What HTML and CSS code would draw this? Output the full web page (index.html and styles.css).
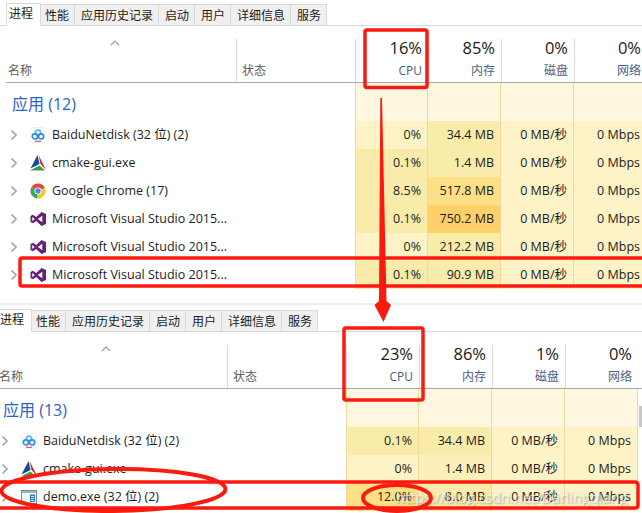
FILE: index.html
```html
<!DOCTYPE html>
<html lang="zh">
<head>
<meta charset="utf-8">
<title>任务管理器</title>
<link rel="stylesheet" href="styles.css">
</head>
<body>
<svg class="defs" width="0" height="0" aria-hidden="true">
  <symbol id="i-baidu" viewBox="0 0 16 16">
    <rect x="0.500" y="0.500" width="15" height="15" rx="2" fill="#fff" stroke="#f1f1f1"/>
    <circle cx="8" cy="5.600" r="2.600" fill="none" stroke="#55b4ee" stroke-width="1.700"/>
    <circle cx="4.900" cy="9.400" r="2.600" fill="none" stroke="#2f8fe6" stroke-width="1.700"/>
    <circle cx="11.100" cy="9.400" r="2.600" fill="none" stroke="#2f8fe6" stroke-width="1.700"/>
    <path d="M5 14.300h6" stroke="#ee5a64" stroke-width="1.300"/>
  </symbol>
  <symbol id="i-cmake" viewBox="0 0 16 16">
    <path d="M7.500 0 L0.500 13.500 L9.500 9Z" fill="#174a96"/>
    <path d="M8.500 0 L16 15 L10.500 9Z" fill="#c8252c"/>
    <path d="M0 15.500 L9.500 10.500 L15 15.500Z" fill="#3a9c48"/>
  </symbol>
  <symbol id="i-chrome" viewBox="0 0 16 16">
    <path d="M8 8 L1.500 4.200 A7.500 7.500 0 0 1 14.900 5Z" fill="#e0483e"/>
    <path d="M8 8 L14.900 5 A7.500 7.500 0 0 1 7 15.400Z" fill="#f6c42e"/>
    <path d="M8 8 L7 15.400 A7.500 7.500 0 0 1 1.500 4.200Z" fill="#3aa757"/>
    <circle cx="8" cy="8" r="3.600" fill="#fff"/>
    <circle cx="8" cy="8" r="2.700" fill="#4a8af4"/>
  </symbol>
  <symbol id="i-vs" viewBox="0 0 16 16">
    <path d="M11.500 1 L16 3 V13 L11.500 15 L6.200 10 L3 12.300 L0.500 11 V5 L3 3.700 L6.200 6 Z M2.200 6 V10 L4.800 8 Z M7.800 8 L12.300 11.300 V4.700 Z" fill="#68217a" fill-rule="evenodd"/>
  </symbol>
  <symbol id="i-app" viewBox="0 0 16 16">
    <rect x="0.500" y="1.500" width="15" height="13" fill="#f4f6f8" stroke="#7d8792"/>
    <rect x="1" y="2" width="14" height="2" fill="#9fb3c6"/>
    <rect x="9" y="5.500" width="5" height="7.500" fill="#2f7fd0"/>
    <path d="M10 7.500h3M10 9.500h3M10 11.500h3" stroke="#fff" stroke-width="0.800"/>
  </symbol>
  <symbol id="i-chev" viewBox="0 0 8 12">
    <path d="M1.500 1.500 L6 6 L1.500 10.500" fill="none" stroke="#a6a6a6" stroke-width="1.700"/>
  </symbol>
  <symbol id="i-sort" viewBox="0 0 10 6">
    <path d="M1 5 L5 1 L9 5" fill="none" stroke="#9a9a9a" stroke-width="1.200"/>
  </symbol>
</svg>

<main class="page">
  <section class="manager">
    <nav class="tabs">
      <span class="tab tab-on">进程</span><span class="tab">性能</span><span class="tab">应用历史记录</span><span class="tab">启动</span><span class="tab">用户</span><span class="tab">详细信息</span><span class="tab">服务</span>
    </nav>
    <div class="thead">
      <div class="th th-name"><svg class="sort"><use href="#i-sort"/></svg><span class="lab">名称</span></div>
      <div class="th th-status"><span class="lab">状态</span></div>
      <div class="th th-num"><span class="pct">16%</span><span class="lab">CPU</span></div>
      <div class="th th-num"><span class="pct">85%</span><span class="lab">内存</span></div>
      <div class="th th-num"><span class="pct">0%</span><span class="lab">磁盘</span></div>
      <div class="th th-num"><span class="pct">0%</span><span class="lab">网络</span></div>
    </div>
    <div class="row row-group">
      <div class="group">应用 (12)</div><div></div>
      <div class="c h0"></div><div class="c h0"></div><div class="c h0"></div><div class="c h0"></div>
    </div>
    <div class="row">
      <div class="proc"><svg class="chev"><use href="#i-chev"/></svg><svg class="ico"><use href="#i-baidu"/></svg><span class="pname">BaiduNetdisk (32 位) (2)</span></div><div></div>
      <div class="c h1">0%</div><div class="c h2">34.4 MB</div><div class="c h1">0 MB/秒</div><div class="c h1">0 Mbps</div>
    </div>
    <div class="row">
      <div class="proc"><svg class="chev"><use href="#i-chev"/></svg><svg class="ico"><use href="#i-cmake"/></svg><span class="pname">cmake-gui.exe</span></div><div></div>
      <div class="c h2">0.1%</div><div class="c h2">1.4 MB</div><div class="c h1">0 MB/秒</div><div class="c h1">0 Mbps</div>
    </div>
    <div class="row">
      <div class="proc"><svg class="chev"><use href="#i-chev"/></svg><svg class="ico"><use href="#i-chrome"/></svg><span class="pname">Google Chrome (17)</span></div><div></div>
      <div class="c h2">8.5%</div><div class="c h3">517.8 MB</div><div class="c h1">0 MB/秒</div><div class="c h1">0 Mbps</div>
    </div>
    <div class="row">
      <div class="proc"><svg class="chev"><use href="#i-chev"/></svg><svg class="ico"><use href="#i-vs"/></svg><span class="pname">Microsoft Visual Studio 2015...</span></div><div></div>
      <div class="c h2">0.1%</div><div class="c h4">750.2 MB</div><div class="c h1">0 MB/秒</div><div class="c h1">0 Mbps</div>
    </div>
    <div class="row">
      <div class="proc"><svg class="chev"><use href="#i-chev"/></svg><svg class="ico"><use href="#i-vs"/></svg><span class="pname">Microsoft Visual Studio 2015...</span></div><div></div>
      <div class="c h1">0%</div><div class="c h2">212.2 MB</div><div class="c h1">0 MB/秒</div><div class="c h1">0 Mbps</div>
    </div>
    <div class="row">
      <div class="proc"><svg class="chev"><use href="#i-chev"/></svg><svg class="ico"><use href="#i-vs"/></svg><span class="pname">Microsoft Visual Studio 2015...</span></div><div></div>
      <div class="c h2">0.1%</div><div class="c h2">90.9 MB</div><div class="c h1">0 MB/秒</div><div class="c h1">0 Mbps</div>
    </div>
  </section>

  <hr class="divider">

  <section class="manager manager-b">
    <nav class="tabs">
      <span class="tab tab-on">进程</span><span class="tab">性能</span><span class="tab">应用历史记录</span><span class="tab">启动</span><span class="tab">用户</span><span class="tab">详细信息</span><span class="tab">服务</span>
    </nav>
    <div class="thead">
      <div class="th th-name"><svg class="sort"><use href="#i-sort"/></svg><span class="lab">名称</span></div>
      <div class="th th-status"><span class="lab">状态</span></div>
      <div class="th th-num"><span class="pct">23%</span><span class="lab">CPU</span></div>
      <div class="th th-num"><span class="pct">86%</span><span class="lab">内存</span></div>
      <div class="th th-num"><span class="pct">1%</span><span class="lab">磁盘</span></div>
      <div class="th th-num"><span class="pct">0%</span><span class="lab">网络</span></div>
    </div>
    <div class="row row-group">
      <div class="group">应用 (13)</div><div></div>
      <div class="c h0"></div><div class="c h0"></div><div class="c h0"></div><div class="c h0"></div>
    </div>
    <div class="row">
      <div class="proc"><svg class="chev"><use href="#i-chev"/></svg><svg class="ico"><use href="#i-baidu"/></svg><span class="pname">BaiduNetdisk (32 位) (2)</span></div><div></div>
      <div class="c h2">0.1%</div><div class="c h2">34.4 MB</div><div class="c h1">0 MB/秒</div><div class="c h1">0 Mbps</div>
    </div>
    <div class="row">
      <div class="proc"><svg class="chev"><use href="#i-chev"/></svg><svg class="ico"><use href="#i-cmake"/></svg><span class="pname">cmake-gui.exe</span></div><div></div>
      <div class="c h1">0%</div><div class="c h1b">1.4 MB</div><div class="c h1">0 MB/秒</div><div class="c h1">0 Mbps</div>
    </div>
    <div class="row">
      <div class="proc"><svg class="chev"><use href="#i-chev"/></svg><svg class="ico"><use href="#i-app"/></svg><span class="pname">demo.exe (32 位) (2)</span></div><div></div>
      <div class="c h3">12.0%</div><div class="c h2">8.0 MB</div><div class="c h1">0 MB/秒</div><div class="c h1">0 Mbps</div>
    </div>
  </section>

  <div class="scroll-thumb"></div>
  <div class="watermark">https://blog.csdn.net/Darlingqiang</div>

  <svg class="marks" viewBox="0 0 642 513" width="642" height="513" aria-hidden="true">
    <g fill="none" stroke="#fb1a10" stroke-width="3.500">
      <rect x="365" y="30" width="62" height="57.500" rx="2"/>
      <path d="M650 258 H22 Q20 258 20 260 V284 Q20 286 22 286 H650"/>
      <path d="M344 400 V330 Q344 328 346 328 H421 Q423 328 423 330 V398 Q423 400 421 400 H346 Q344 400 344 398"/>
      <path d="M0 482 H635 Q638 482 638 485 V505 Q638 508 635 508 H0"/>
      <ellipse cx="113.500" cy="490" rx="112" ry="21" transform="rotate(-0.500 113 490)" stroke-width="4"/>
      <ellipse cx="397" cy="498" rx="34" ry="13" stroke-width="4"/>
    </g>
    <path d="M380.300 98 H382 L386.500 301 L391 305 L383.500 322 L374.500 305 L379 301Z" fill="#fb1a10"/>
  </svg>
</main>
</body>
</html>
```

FILE: styles.css
```css
* { box-sizing: border-box; }
html, body { margin: 0; padding: 0; background: #fff; }
body { width: 642px; height: 513px; overflow: hidden; }
.defs { position: absolute; }
.page {
  position: relative;
  width: 642px;
  height: 513px;
  overflow: hidden;
  font-family: "Open Sans", "Noto Sans CJK SC", sans-serif;
  font-size: 12.500px;
  color: #1c1c1c;
}
.manager { width: 660px; }
.manager-b { margin-left: -9px; }

.tabs {
  display: flex;
  align-items: flex-end;
  height: 26px;
  padding-left: 6px;
  border-bottom: 1px solid #d9d9d9;
}
.tab {
  height: 21px;
  padding: 0 5px 0 6px;
  line-height: 21px;
  font-size: 12px;
  background: #f0f0f0;
  border: 1px solid #d9d9d9;
  border-left: 0;
  border-bottom: 0;
  white-space: nowrap;
}
.tab-on {
  height: 23px;
  width: 35px;
  padding: 0 2px;
  line-height: 20px;
  background: #fff;
  border-left: 1px solid #d9d9d9;
  margin-right: -2px;
  margin-bottom: -1px;
  position: relative;
}

.thead, .row {
  display: grid;
  grid-template-columns: 230px 119px 73px 73px 73px 73px;
  margin-left: 6px;
}
.thead {
  height: 57px;
  padding-top: 13px;
  border-bottom: 1px solid #a8a8a8;
}
.th {
  position: relative;
  display: flex;
  flex-direction: column;
  justify-content: flex-end;
  height: 43px;
  color: #4d6082;
  border-left: 1px solid #dadada;
  padding-bottom: 2px;
}
.th-name { border-left: 0; }
.th-name .lab { margin-left: 2px; color: #5b5b5b; }
.th-status .lab { margin-left: 5px; color: #5b5b5b; }
.sort {
  position: absolute;
  left: 104px;
  top: 1px;
  width: 10px;
  height: 6px;
}
.th-num { align-items: flex-end; padding-right: 6px; }
.pct { font-size: 16.500px; line-height: 24px; color: #1a1a1a; margin-bottom: 2px; }
.lab { font-size: 12px; line-height: 18px; }

.row { height: 28px; line-height: 28px; }
.row-group { height: 38px; }
.group { color: #2d62c8; font-size: 16px; padding-left: 6px; line-height: 42px; }
.proc {
  display: flex;
  align-items: center;
  padding-left: 4px;
  white-space: nowrap;
}
.pname { margin-bottom: 1px; line-height: 27px; }
.chev { width: 8px; height: 12px; margin-right: 12px; flex: none; }
.ico { width: 16px; height: 16px; margin-right: 6px; flex: none; }
.c {
  text-align: right;
  padding-right: 6px;
  border-right: 1px solid #eeda9f;
  white-space: nowrap;
}
.row > .c:nth-child(3) { border-left: 1px solid #eeda9f; }
.h0 { background: #fff7e0; }
.h1 { background: #fdf3c7; }
.h1b { background: #fbefba; }
.h2 { background: #f9ecaa; }
.h3 { background: #fddf85; }
.h4 { background: #fdd06a; }

.divider {
  height: 2px;
  margin: 14px 0 1px;
  border: 0;
  background: #eeeeee;
}
.scroll-thumb {
  position: absolute;
  left: 639px;
  top: 406px;
  width: 3px;
  height: 21px;
  background: #c8c8c8;
}
.watermark {
  position: absolute;
  left: 396px;
  top: 489px;
  font-size: 14.500px;
  line-height: 18px;
  white-space: nowrap;
  color: rgba(255,255,255,.7);
  text-shadow: 1px 1px 2px rgba(90,90,90,.55);
}
.marks { position: absolute; left: 0; top: 0; }
```
